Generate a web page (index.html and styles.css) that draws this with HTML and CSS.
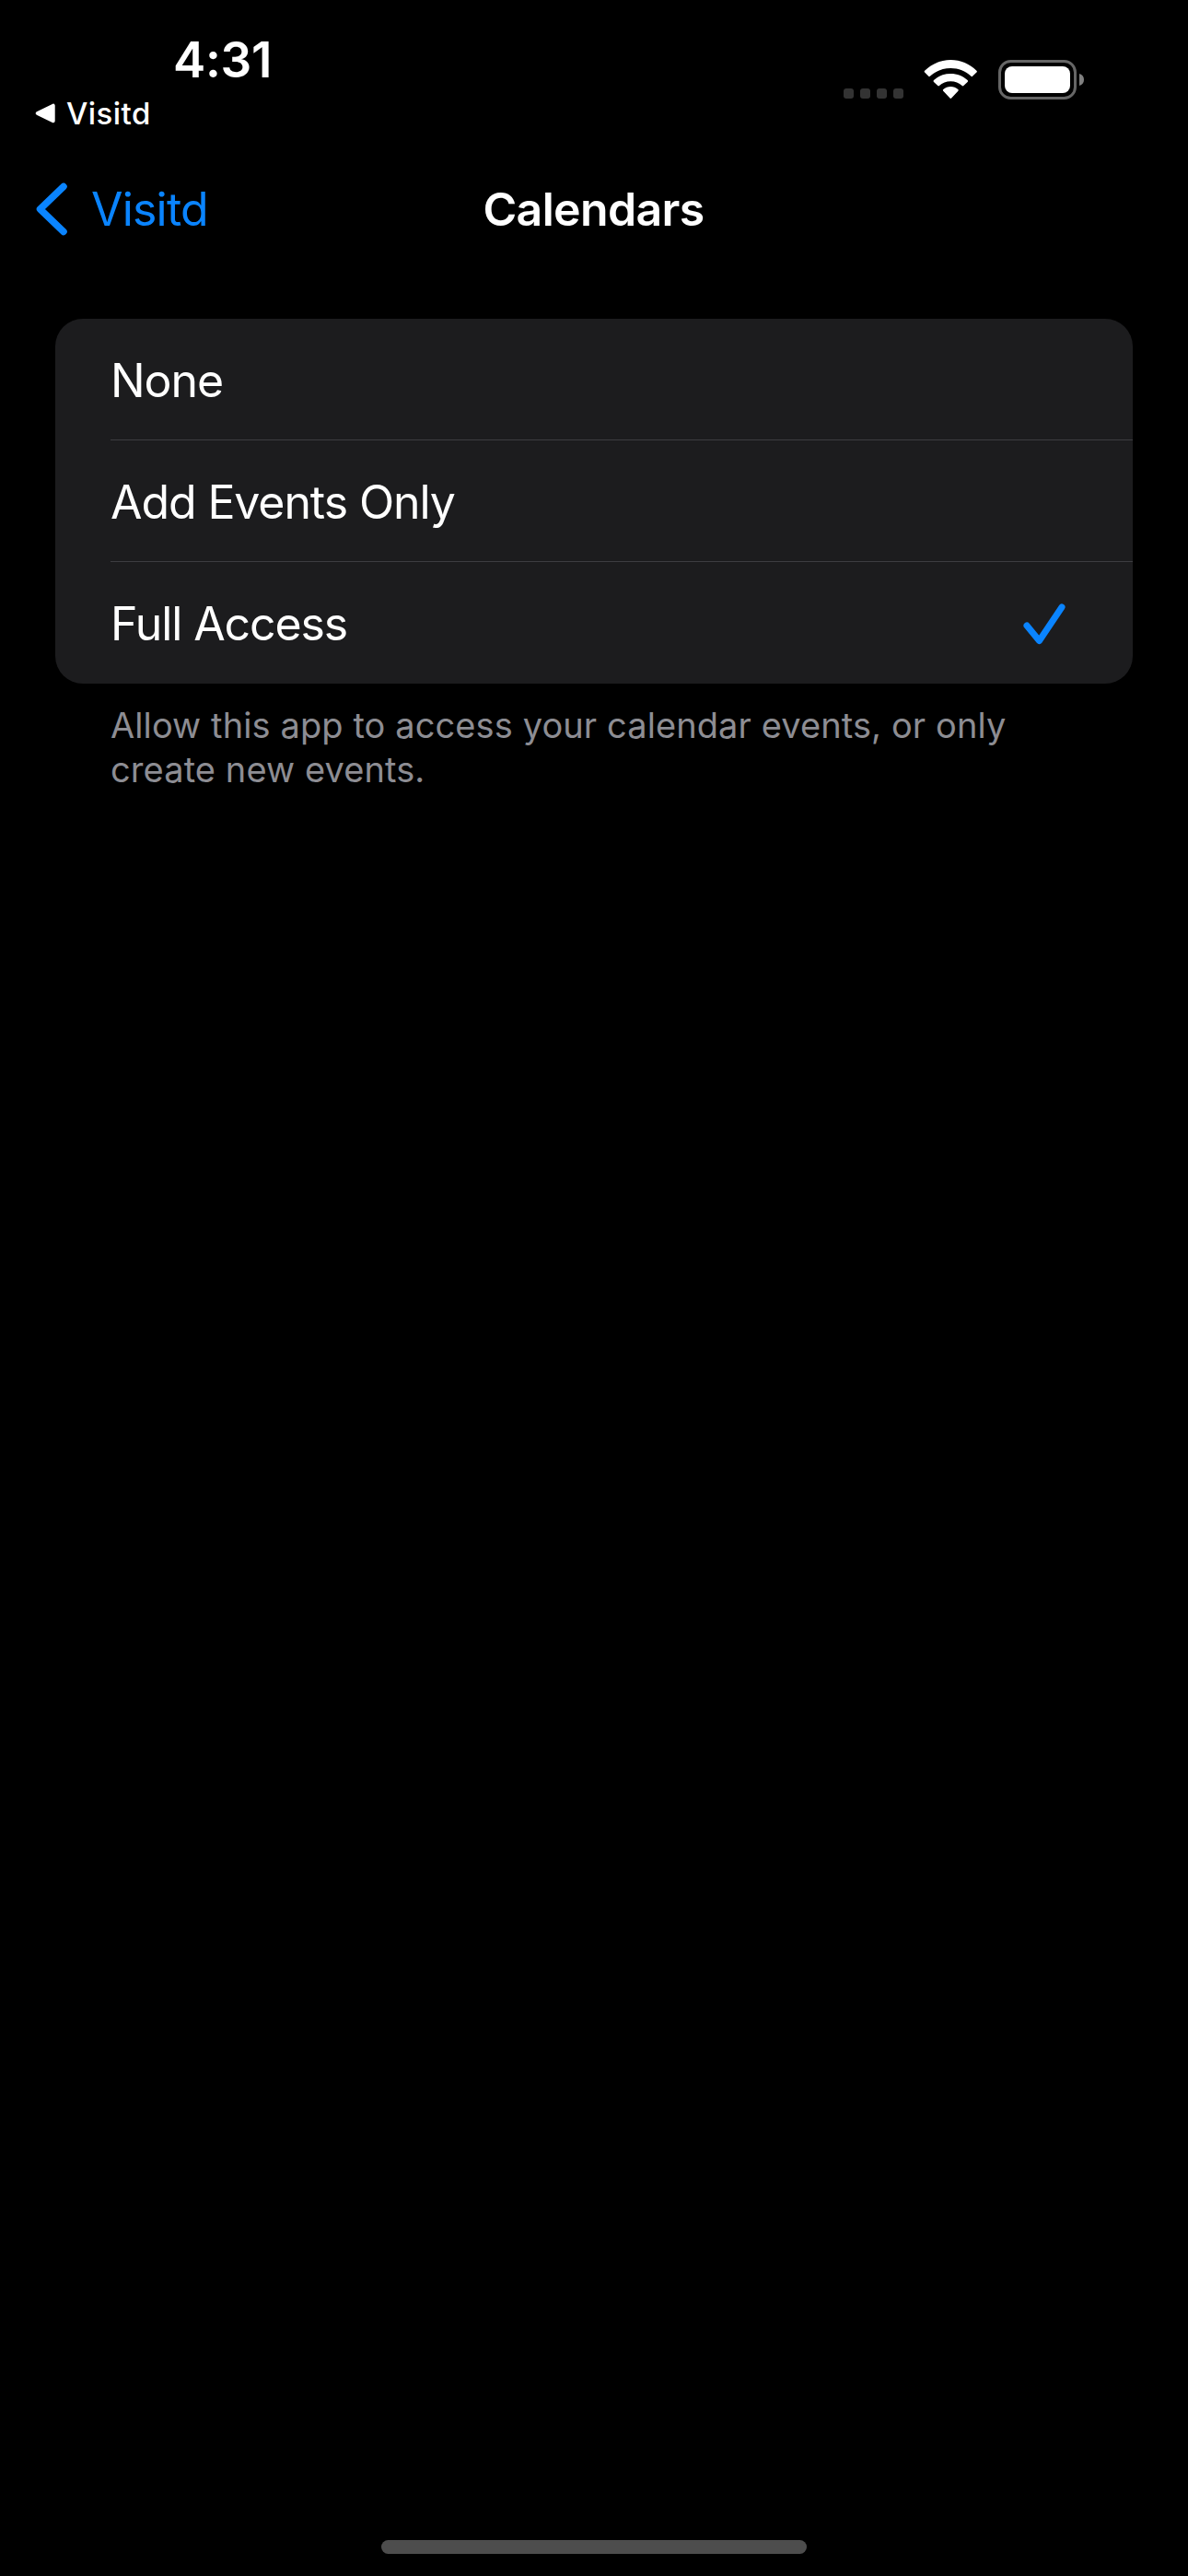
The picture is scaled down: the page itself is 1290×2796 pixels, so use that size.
FILE: index.html
```
<!DOCTYPE html>
<html lang="en">
<head>
<meta charset="utf-8">
<title>Calendars</title>
<link rel="stylesheet" href="styles.css">
</head>
<body>
<div class="screen">
  <header class="status">
    <div class="status-left">
      <div class="time">4:31</div>
      <div class="return">
        <svg class="return-icon" width="22" height="22" viewBox="0 0 22 22"><path d="M2.700 11 L19.700 2.700 V19.300 Z" fill="#fff" stroke="#fff" stroke-width="4" stroke-linejoin="round"/></svg>
        <span class="return-text">Visitd</span>
      </div>
    </div>
    <div class="status-icons">
      <svg width="65" height="11" viewBox="0 0 65 11" class="signal"><g fill="#333"><rect width="11" height="11" rx="3"/><rect x="18" width="11" height="11" rx="3"/><rect x="36" width="11" height="11" rx="3"/><rect x="54" width="11" height="11" rx="3"/></g></svg>
      <svg width="58" height="43" viewBox="0 0 58 43" class="wifi"><g fill="#fff"><path d="M1.100 13.600Q.2 12.700 1.100 11.700C8.800 4.200 18.700 0 29.300 0S49.800 4.200 57.400 11.700Q58.400 12.700 57.400 13.600L53 17.800Q52.300 18.500 51.500 17.800C45.500 12.200 37.800 9 29.300 9S12.800 12.200 6.800 17.800Q6 18.500 5.300 17.800Z"/><path d="M11 23.900Q10.100 23 11 22C15.900 17.500 22.300 15 29.300 15S42.700 17.500 47.600 22Q48.500 23 47.600 23.900L43.300 28.100Q42.500 28.800 41.700 28.100C38.400 25 34.100 23.300 29.300 23.300S20.200 25 16.900 28.100Q16.100 28.800 15.300 28.100Z"/><path d="M21.200 33.800Q20.300 32.900 21.300 32.100C23.500 30.200 26.300 29 29.300 29S35.100 30.200 37.300 32.100Q38.300 32.900 37.400 33.800L30.100 41.500Q29.300 42.300 28.500 41.500Z"/></g></svg>
      <svg width="93" height="43" viewBox="0 0 93 43" class="battery"><rect x="1.500" y="1.500" width="82" height="40" rx="12" fill="none" stroke="#666" stroke-width="3"/><rect x="7" y="7" width="71" height="29" rx="8" fill="#fff"/><path d="M88 15C91.500 16 93 18.500 93 21.500S91.500 27 88 28Z" fill="#808080"/></svg>
    </div>
  </header>
  <nav class="nav">
    <a class="back">
      <svg class="chevron" width="34" height="58" viewBox="0 0 34 58"><path d="M30 4.500 L4.500 29 L30 53.500" fill="none" stroke="#0a84ff" stroke-width="7.500" stroke-linecap="round" stroke-linejoin="round"/></svg>
      <span class="back-text">Visitd</span>
    </a>
    <h1 class="title">Calendars</h1>
  </nav>
  <main class="content">
    <ul class="card">
      <li class="row">None</li>
      <li class="row">Add Events Only</li>
      <li class="row">Full Access
        <svg width="46" height="45" viewBox="0 0 46 45"><path d="M4 24 L17.500 40.500 L42 4" fill="none" stroke="#0a84ff" stroke-width="7" stroke-linecap="round" stroke-linejoin="round"/></svg></li>
    </ul>
    <p class="note">Allow this app to access your calendar events, or only<br>create new events.</p>
  </main>
  <div class="home"></div>
</div>
</body>
</html>
```
FILE: styles.css
```
* { box-sizing: border-box; margin: 0; padding: 0; }
body { background: #000; color: #fff; font-family: Inter, "Liberation Sans", sans-serif; }
svg { display: block; flex: none; }
.screen { width: 1290px; height: 2796px; display: flex; flex-direction: column; }
.status { height: 177px; display: flex; justify-content: space-between; padding: 0 113px 0 38px; }
.time { margin-top: 35px; padding-left: 150px; font-size: 53px; line-height: 60px; font-weight: 600; letter-spacing: -0.3px; }
.return { display: flex; align-items: center; gap: 12px; height: 40px; margin-top: 8px; font-size: 33px; line-height: 40px; font-weight: 500; letter-spacing: 0.45px; }
.status-icons { display: flex; padding-top: 65px; }
.signal { margin-top: 31px; }
.wifi { margin-left: 22px; }
.battery { margin-left: 23px; }
.nav { height: 100px; display: grid; grid-template-columns: 1fr auto 1fr; align-items: center; padding: 0 40px 0 39px; font-size: 50px; line-height: 100px; }
.back { display: flex; align-items: center; gap: 26px; color: #0a84ff; letter-spacing: -0.8px; }
.title { font-size: 50px; font-weight: 600; letter-spacing: -0.65px; }
.content { padding: 69px 60px 0; }
.card { list-style: none; background: #1c1c1e; border-radius: 30px; }
.row { height: 132px; display: flex; align-items: center; justify-content: space-between; margin-left: 60px; padding: 3px 73px 0 0; border-bottom: 1px solid #3d3d41; font-size: 50px; letter-spacing: -1.1px; }
.row:last-child { padding-top: 2px; border-bottom: 0; }
.note { padding: 21px 60px 0; color: #8d8d93; font-size: 38px; line-height: 48px; letter-spacing: 0.1px; white-space: nowrap; }
.home { width: 462px; height: 15px; margin: auto auto 24px; border-radius: 8px; background: #4d4d4d; }
```
